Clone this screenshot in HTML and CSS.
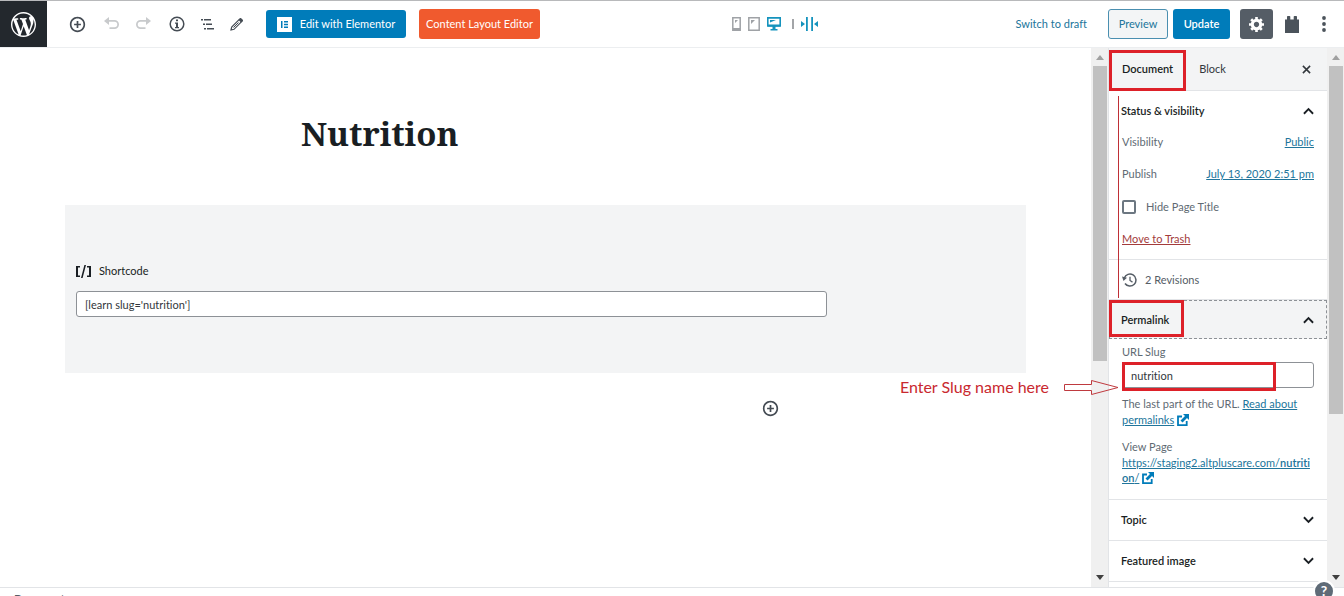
FILE: index.html
```html
<!DOCTYPE html>
<html lang="en">
<head>
<meta charset="utf-8">
<title>Edit Page – Nutrition</title>
<link rel="stylesheet" href="styles.css">
</head>
<body>
<header class="topbar">
  <a class="logo" href="#" aria-label="View pages"><svg viewBox="0 0 20 20" width="25" height="25"><path d="M20 10c0-5.51-4.49-10-10-10C4.48 0 0 4.49 0 10c0 5.52 4.48 10 10 10 5.51 0 10-4.48 10-10zM7.78 15.37L4.37 6.22c.55-.02 1.17-.08 1.17-.08.5-.06.44-1.13-.06-1.11 0 0-1.45.11-2.37.11-.18 0-.37 0-.58-.01C4.12 2.69 6.87 1.11 10 1.11c2.33 0 4.45.87 6.05 2.34-.68-.11-1.65.39-1.65 1.58 0 .74.45 1.36.9 2.1.35.61.55 1.36.55 2.46 0 1.49-1.4 5-1.4 5l-3.03-8.37c.54-.02.82-.17.82-.17.5-.05.44-1.25-.06-1.22 0 0-1.44.12-2.38.12-.87 0-2.33-.12-2.33-.12-.5-.03-.56 1.2-.06 1.22l.92.08 1.26 3.41zM17.41 10c.24-.64.74-1.87.43-4.25.7 1.29 1.05 2.71 1.05 4.25 0 3.29-1.73 6.24-4.4 7.78.97-2.59 1.94-5.2 2.92-7.78zM6.1 18.09C3.12 16.65 1.11 13.53 1.11 10c0-1.3.23-2.48.72-3.59C3.25 10.3 4.67 14.2 6.1 18.09zm4.03-6.63l2.58 6.98c-.86.29-1.76.45-2.71.45-.79 0-1.57-.11-2.29-.33.81-2.38 1.62-4.74 2.42-7.1z"/></svg></a>
  <div class="tools">
    <button class="icon-btn" aria-label="Add block"><svg viewBox="0 0 20 20" width="17" height="17"><path d="M10 1c-5 0-9 4-9 9s4 9 9 9 9-4 9-9-4-9-9-9zm0 16c-3.9 0-7-3.1-7-7s3.1-7 7-7 7 3.1 7 7-3.1 7-7 7zm1-11H9v3H6v2h3v3h2v-3h3V9h-3V6z"/></svg></button>
    <button class="icon-btn faded" aria-label="Undo"><svg viewBox="0 0 16 16" width="16" height="16"><path d="M1 5l5-4v3h5.500a4 4 0 0 1 0 9H6.500v-1.700h5a2.400 2.400 0 0 0 0-5.500H6V9z"/></svg></button>
    <button class="icon-btn faded" aria-label="Redo"><svg viewBox="0 0 16 16" width="16" height="16"><path d="M15 5l-5-4v3H4.500a4 4 0 0 0 0 9h5v-1.700h-5a2.400 2.400 0 0 1 0-5.500H10V9z"/></svg></button>
    <button class="icon-btn" aria-label="Content structure"><svg viewBox="0 0 16 16" width="16" height="16"><circle cx="8" cy="8" r="6.800" fill="none" stroke="currentColor" stroke-width="1.500"/><path d="M7 3.500h2v1.800H7zM6 6.500h3v4.500h1v1.200H6V11h1V7.700H6z"/></svg></button>
    <button class="icon-btn narrow" aria-label="Block navigation"><svg viewBox="0 0 13 11" width="13" height="11"><path d="M0 0h2v1.500H0zM3 0h7v1.500H3zM2 4.500h2V6H2zM5 4.500h6V6H5zM3 9h2v1.500H3zM6 9h7v1.500H6z"/></svg></button>
    <button class="icon-btn narrow" aria-label="Edit"><svg viewBox="0 0 14 14" width="14" height="14"><path d="M1 13l.700-3L9.800 1.900a.8.8 0 0 1 1.200 0l1.100 1.100a.8.8 0 0 1 0 1.200L4 12.300z" fill="none" stroke="currentColor" stroke-width="1.200"/><path d="M8.500 3l2.500 2.500 2-2L10.600 1z"/><path d="M3.500 10.500l5-5" stroke="currentColor" stroke-width="1"/></svg></button>
    <button class="btn blue elementor"><svg viewBox="0 0 15 15" width="15" height="15"><path fill="#fff" d="M0 0h15v15H0z"/><path fill="#007cba" d="M4 4h1.500v7H4zM7 4h4v1.400H7zM7 6.800h4v1.400H7zM7 9.600h4V11H7z"/></svg>Edit with Elementor</button>
    <button class="btn orange">Content Layout Editor</button>
  </div>
  <div class="devices">
    <button aria-label="Mobile"><svg viewBox="0 0 9 14" width="9" height="14"><path fill="none" stroke="#9fa2a6" stroke-width="1.500" d="M.8.8h7.400v12.400H.8z"/><path fill="#9fa2a6" d="M1 11h7v2.500H1zM3 3h3L3 6z"/></svg></button>
    <button aria-label="Tablet"><svg viewBox="0 0 12 14" width="12" height="14"><path fill="none" stroke="#9fa2a6" stroke-width="1.500" d="M.8.8h10.400v12.400H.8z"/><path fill="#9fa2a6" d="M3 3h4L3 7z"/></svg></button>
    <button aria-label="Desktop"><svg viewBox="0 0 14 14" width="14" height="14"><path fill="none" stroke="#1593bd" stroke-width="1.600" d="M.8.9h12.400v8H.8z"/><path fill="#1593bd" d="M3 3h6L3 5.500zM1 7.500h12v2H1zM5.500 9h3v3h2v1.500h-7V12h2z"/></svg></button>
    <span class="divider"></span>
    <button aria-label="Width"><svg viewBox="0 0 17 14" width="17" height="14"><path fill="#1593bd" d="M0 4l4 3-4 3zM17 4l-4 3 4 3zM5 0h1.800v14H5zM10.200 0H12v14h-1.800z"/></svg></button>
  </div>
  <div class="actions">
    <a class="draft" href="#">Switch to draft</a>
    <button class="btn outline">Preview</button>
    <button class="btn blue update">Update</button>
    <button class="btn gear" aria-label="Settings"><svg viewBox="1 2 17 17" width="15" height="15"><path d="M18 12h-2.180c-.17.7-.44 1.350-.81 1.930l1.540 1.540-2.100 2.100-1.540-1.540c-.58.36-1.230.63-1.910.79V19H8v-2.180c-.68-.16-1.330-.43-1.910-.79l-1.540 1.540-2.120-2.120 1.540-1.540c-.36-.58-.63-1.230-.79-1.910H1V9.030h2.170c.16-.7.44-1.350.8-1.940L2.430 5.550l2.100-2.100 1.540 1.540c.58-.37 1.240-.64 1.930-.81V2h3v2.180c.68.16 1.330.43 1.910.79l1.540-1.540 2.120 2.120-1.540 1.540c.36.59.64 1.240.8 1.940H18V12zm-8.500 1.500c1.660 0 3-1.340 3-3s-1.340-3-3-3-3 1.340-3 3 1.340 3 3 3z"/></svg></button>
    <button class="plain" aria-label="Page attributes"><svg viewBox="0 0 14 17" width="14" height="17"><path d="M0 3.500h2V.8Q2 0 2.800 0h1.700q.8 0 .8.800v2.700h3.400V.8q0-.8.8-.8h1.700q.8 0 .8.800v2.700h2V17H0z"/></svg></button>
    <button class="plain more" aria-label="More"><svg viewBox="0 0 4 16" width="4" height="16"><circle cx="2" cy="2" r="1.900"/><circle cx="2" cy="8" r="1.900"/><circle cx="2" cy="14" r="1.900"/></svg></button>
  </div>
</header>

<div class="workspace">
  <main class="editor">
    <h1>Nutrition</h1>
    <section class="block">
      <label for="shortcode"><svg viewBox="0 0 15 13" width="15" height="13"><path d="M0 1h4v1.600H2v7.800h2V12H0zM15 1h-4v1.600h2v7.800h-2V12h4zM8.400 0H10L6.600 13H5z"/></svg>Shortcode</label>
      <input id="shortcode" type="text" value="[learn slug='nutrition']">
    </section>
    <div class="append"><button class="icon-btn" aria-label="Add block"><svg viewBox="0 0 20 20" width="17" height="17"><path d="M10 1c-5 0-9 4-9 9s4 9 9 9 9-4 9-9-4-9-9-9zm0 16c-3.9 0-7-3.1-7-7s3.1-7 7-7 7 3.1 7 7-3.1 7-7 7zm1-11H9v3H6v2h3v3h2v-3h3V9h-3V6z"/></svg></button></div>
  </main>
  <div class="scroll"><i class="up"></i><div class="rail"><div class="thumb" style="height:58.500%"></div></div><i class="down"></i></div>

  <aside class="sidebar">
    <div class="tabs">
      <button class="tab active">Document<span class="mark"></span></button>
      <button class="tab">Block</button>
      <button class="close" aria-label="Close settings"><svg viewBox="0 0 10 10" width="9" height="9"><path d="M1 1l8 8M9 1l-8 8" fill="none" stroke="currentColor" stroke-width="1.700"/></svg></button>
    </div>
    <section class="panel status">
      <button class="head">Status &amp; visibility<svg viewBox="0 0 12 8" width="11" height="8"><path d="M1 7l5-5 5 5"/></svg></button>
      <div class="row"><span>Visibility</span><a href="#">Public</a></div>
      <div class="row"><span>Publish</span><a href="#">July 13, 2020 2:51 pm</a></div>
      <div class="row check"><input type="checkbox" id="hide"><label for="hide">Hide Page Title</label></div>
      <div class="row last"><a class="trash" href="#">Move to Trash</a></div>
      <span class="guide"></span>
    </section>
    <section class="panel"><button class="revisions"><svg viewBox="0 0 15 14" width="15" height="14"><path d="M2.300 5A6 6 0 1 1 3 10.500" fill="none" stroke="currentColor" stroke-width="1.500"/><path d="M0 3.500l5 1.200L1.500 8z"/><path d="M8 3.800v3.700l2.500 1.600" fill="none" stroke="currentColor" stroke-width="1.300"/></svg>2 Revisions</button></section>
    <section class="panel link-panel">
      <button class="head focus">Permalink<svg viewBox="0 0 12 8" width="11" height="8"><path d="M1 7l5-5 5 5"/></svg><span class="mark"></span></button>
      <div class="content">
        <label for="slug">URL Slug</label>
        <div class="field"><input id="slug" type="text" value="nutrition"><span class="mark"></span></div>
        <p class="hint">The last part of the URL. <a href="#">Read about permalinks</a> <svg class="ext" viewBox="0 0 12 12" width="12" height="12"><path d="M5 2.500H1v8.700h8.700V7" fill="none" stroke="currentColor" stroke-width="1.800"/><path d="M6 0h6v6l-2-2-4.500 4.500-2-2L8 2z"/></svg></p>
        <p class="view">View Page</p>
        <p class="url"><a href="#">https://staging2.altpluscare.com/<b>nutrition</b>/</a> <svg class="ext" viewBox="0 0 12 12" width="12" height="12"><path d="M5 2.500H1v8.700h8.700V7" fill="none" stroke="currentColor" stroke-width="1.800"/><path d="M6 0h6v6l-2-2-4.500 4.500-2-2L8 2z"/></svg></p>
      </div>
    </section>
    <section class="panel"><button class="head">Topic<svg viewBox="0 0 12 8" width="11" height="8"><path d="M1 1l5 5 5-5"/></svg></button></section>
    <section class="panel"><button class="head">Featured image<svg viewBox="0 0 12 8" width="11" height="8"><path d="M1 1l5 5 5-5"/></svg></button></section>
  </aside>
  <div class="scroll"><i class="up"></i><div class="rail"><div class="thumb" style="height:69%"></div></div><i class="down"></i></div>

  <div class="callout">Enter Slug name here<svg viewBox="0 0 55 15" width="55" height="15"><path d="M.5 4.500h27v-4l26.500 7-26.500 7v-4H.5z" fill="none" stroke="#bf3a3f"/></svg></div>
</div>
<footer class="crumbs">Document</footer>
<button class="help" aria-label="Help">?</button>
</body>
</html>
```
FILE: styles.css
```css
* { box-sizing: border-box; }
body {
  margin: 0;
  height: 100vh;
  display: flex;
  flex-direction: column;
  overflow: hidden;
  position: relative;
  background: #fff;
  color: #191e23;
  font: 11px/16px Lato, "Open Sans", sans-serif;
  font-variant-ligatures: none;
}
button, input { font: inherit; color: inherit; font-variant-ligatures: none; }
button { background: none; border: 0; padding: 0; cursor: pointer; }
svg { display: block; fill: currentColor; flex: none; }
a { color: #21759b; }
p { margin: 0; }

.topbar {
  flex: none;
  height: 48px;
  display: flex;
  align-items: center;
  justify-content: space-between;
  border-top: 1px solid #b8b9bb;
  border-bottom: 1px solid #eceef0;
  padding-right: 18px;
}
.logo {
  width: 47px;
  align-self: stretch;
  display: flex;
  align-items: center;
  justify-content: center;
  background: #23282d;
  color: #fff;
}
.tools, .actions, .devices { display: flex; align-items: center; }
.tools { margin-left: 14px; }
.icon-btn {
  width: 33px;
  height: 32px;
  display: flex;
  align-items: center;
  justify-content: center;
  color: #454c54;
}
.icon-btn.narrow { width: 29px; }
.icon-btn.faded { color: #c8cacc; }
.btn {
  height: 30px;
  border-radius: 3px;
  display: flex;
  align-items: center;
  justify-content: center;
}
.blue { background: #007cba; color: #fff; }
.elementor { height: 28px; width: 140px; gap: 8px; margin: 0 13px 0 15px; }
.orange { background: #f05a2e; color: #fff; width: 121px; }
.devices { margin: 0 auto; gap: 7px; padding-right: 6px; height: 30px; }
.divider { width: 2px; height: 10px; background: #a3a5a8; margin: 0 0 0 4px; }
.draft { text-decoration: none; margin-right: 21px; }
.outline { width: 60px; border: 1px solid #4a8fb0; background: #f3f5f6; color: #21759b; }
.update { width: 57px; margin-left: 5px; font-weight: 600; }
.gear { width: 33px; margin-left: 10px; background: #555d66; color: #fff; }
.plain { margin-left: 12px; color: #4b535b; }
.plain.more { margin-left: 23px; }

.workspace { flex: 1; min-height: 0; display: flex; position: relative; }
.editor { flex: 1; min-width: 0; padding: 64px 65px 0; overflow: hidden; }
h1 {
  margin: 0;
  padding-left: 236px;
  font: bold 33px/44px "Noto Serif", "DejaVu Serif", serif;
}
.block { margin-top: 49px; padding: 57px 11px 56px; background: #f3f4f5; }
.block label { display: flex; align-items: center; gap: 8px; height: 18px; }
input[type="text"] {
  display: block;
  width: 100%;
  height: 26px;
  padding: 0 8px;
  border: 1px solid #8d9196;
  border-radius: 3px;
  background: #fff;
  color: #32373c;
}
.block input[type="text"] { width: 80%; margin-top: 11px; }
.append { display: flex; justify-content: center; padding: 19px 0 0 450px; }

.scroll {
  flex: none;
  width: 17px;
  display: flex;
  flex-direction: column;
  align-items: center;
  background: #f0f0f0;
  padding: 7px 0;
}
.rail { flex: 1; width: 14px; padding: 6px 0 4px; }
.thumb { background: #c1c1c1; }
.up, .down { border: 4px solid transparent; }
.up { border-top: 0; border-bottom: 5px solid #a0a0a0; }
.down { border-bottom: 0; border-top: 5px solid #404040; }

.sidebar { flex: none; width: 219px; border-left: 1px solid #e2e4e7; overflow: hidden; color: #606a73; }
.tabs { height: 43px; display: flex; background: #f3f4f5; border-bottom: 1px solid #e2e4e7; color: #32373c; }
.tab { position: relative; padding: 0 13px; }
.tab.active { font-weight: 600; color: #191e23; }
.close { margin-left: auto; padding: 0 16px; }
.mark { position: absolute; border: 3px solid #dd2129; pointer-events: none; }
.tab .mark { inset: 2px 0 -1px 0; }
.panel { position: relative; border-bottom: 1px solid #e2e4e7; }
.head {
  position: relative;
  width: 100%;
  height: 40px;
  display: flex;
  align-items: center;
  justify-content: space-between;
  padding: 0 13px 0 12px;
  color: #191e23;
  font-weight: 600;
}
.head svg { fill: none; stroke: currentColor; stroke-width: 2; }
.row { display: flex; align-items: center; justify-content: space-between; height: 32px; padding: 0 13px; }
.status { padding-bottom: 5px; }
.status .head + .row { height: 22px; margin-bottom: 5px; }
.row.check { justify-content: flex-start; gap: 10px; height: 34px; }
.row.last { height: 30px; }
.row.check input { appearance: none; width: 14px; height: 14px; margin: 0; border: 2px solid #6c7781; border-radius: 2px; }
.trash { color: #a33b3b; }
.guide { position: absolute; z-index: 1; left: 9px; top: 5px; bottom: -39px; width: 1px; background: #bf2f36; }
.revisions { display: flex; align-items: center; gap: 8px; height: 39px; padding: 0 13px; color: #555d66; }
.focus { background: #f3f4f5; border: 1px dashed #8d9196; height: 39px; padding: 0 12px 0 11px; }
.head .mark { left: -1px; top: -1px; width: 75px; height: 37px; }
.content { padding: 5px 13px 14px; }
.content label { display: block; margin-bottom: 2px; }
.field { position: relative; }
.field .mark { inset: 0 38px -3px 0; }
.hint { margin-top: 8px; }
.view { margin-top: 11px; }
.url { line-height: 15px; word-break: break-all; }
.url b { font-weight: 600; }
.ext { display: inline-block; vertical-align: -2px; color: #007cba; }

.callout {
  position: absolute;
  right: 225px;
  top: 328px;
  display: flex;
  align-items: center;
  gap: 15px;
  color: #c9292f;
  font: 16px/22px Lato, "Open Sans", sans-serif;
}
.crumbs { flex: none; height: 9px; overflow: hidden; border-top: 1px solid #e2e4e7; padding: 3px 14px; color: #555d66; }
.help {
  position: absolute;
  right: 9px;
  bottom: -6px;
  width: 22px;
  height: 22px;
  border: 2px solid #fff;
  border-radius: 50%;
  background: #5f6b77;
  color: #fff;
  font-size: 14px;
  font-weight: 700;
}
```
